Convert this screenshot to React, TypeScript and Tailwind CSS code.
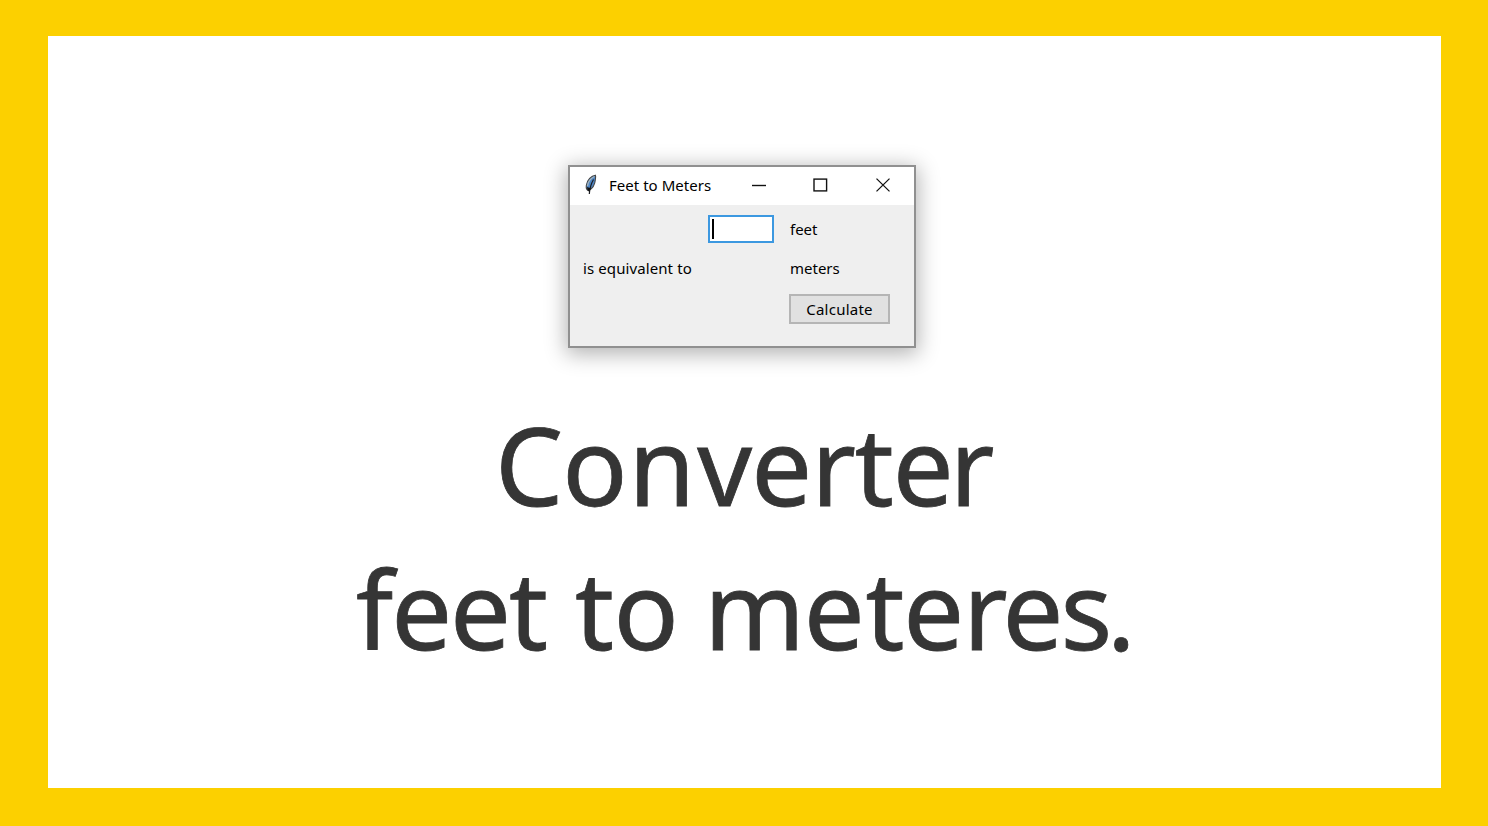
function Feather() {
  return (
    <svg width="16" height="22" viewBox="0 0 16 22" className="shrink-0">
      <path d="M12.4 1.2C8.5 1.8 4 5.800 3.300 11.500C3 14 3.600 16 5.600 16.800C9.500 14.500 12 10 12.300 6C12.500 4 13 2.500 12.400 1.200Z" fill="#4e86c6" stroke="#454545" strokeWidth="1.1" />
      <path d="M11.500 2.500C8 4 5.200 7.500 4.500 12" fill="none" stroke="#a5b5bd" strokeWidth="1.300" />
      <path d="M10.500 5.500C8.500 9 6.800 12.500 6.300 20" fill="none" stroke="#1c1e22" strokeWidth="1.200" />
      <path d="M4 13L7.800 14.200L6.300 17.500L4.500 16Z" fill="#111" />
    </svg>
  );
}

function TitleBar() {
  return (
    <div className="flex h-[38px] items-start bg-white text-black">
      <div className="ml-[13px] mt-[7px] h-[22px] w-4">
        <Feather />
      </div>
      <span className="ml-[10px] mt-[6px] w-[140px] text-[15px] leading-6 tracking-[0.03px]">Feet to Meters</span>
      <svg width="142" height="16" viewBox="0 0 142 16" className="mt-[10px] shrink-0" fill="none" stroke="#111">
        <path d="M3 8.500H17" strokeWidth="1.400" />
        <rect x="65" y="2.100" width="12.600" height="11.800" strokeWidth="1.400" />
        <path d="M127.500 1.600L140.500 14.400M140.500 1.600L127.500 14.400" strokeWidth="1.300" />
      </svg>
    </div>
  );
}

function ConverterWindow() {
  return (
    <div className="mt-[129px] ml-[520px] h-[183px] w-[348px] shrink-0 border-2 border-[#909090] bg-[#efefef] font-['Noto_Sans','Open_Sans',sans-serif] text-[15px] text-black shadow-[0_4px_20px_2px_rgba(0,0,0,0.3)]">
      <TitleBar />
      <div className="flex h-12 items-center">
        <div className="ml-[138px] flex h-[28px] w-[66px] items-center border-2 border-[#3c98e0] bg-white pl-[2px]">
          <div className="h-5 w-[1.500px] bg-black" />
        </div>
        <span className="ml-4 leading-6">feet</span>
      </div>
      <div className="flex h-[30px] items-center">
        <span className="ml-[13px] w-[207px] leading-6 tracking-[0.1px]">is equivalent to</span>
        <span className="leading-6">meters</span>
      </div>
      <button className="ml-[219px] mt-[11px] flex h-[30px] w-[101px] items-center justify-center border-2 border-[#b5b5b5] bg-[#e1e1e1] leading-6 tracking-[0.250px]">
        Calculate
      </button>
    </div>
  );
}

export default function App() {
  return (
    <main className="h-[826px] w-[1488px] bg-[#fcd000] pt-9 pl-12">
      <section className="flex h-[752px] w-[1393px] flex-col overflow-hidden bg-white">
        <ConverterWindow />
        <h1 className="mt-[45px] font-['Noto_Sans','Open_Sans',sans-serif] text-[108px] leading-[144px] font-normal whitespace-nowrap text-[#353535] [-webkit-text-stroke:0.800px_#353535]">
          <span className="ml-[447px] block tracking-[-1px]">
            C<span className="tracking-[1px]">o</span>
            <span className="tracking-[2px]">n</span>vert<span className="tracking-[-4px]">e</span>r
          </span>
          <span className="ml-[308px] flex">
            <span className="w-[219px] tracking-[-2px]">feet</span>
            <span className="w-[129px] tracking-[-0.500px]">to</span>
            <span className="tracking-[-1.300px]">
              m<span className="tracking-[1px]">e</span>te<span className="tracking-[-5px]">r</span>
              <span className="tracking-[-3px]">e</span>
              <span className="tracking-[-5.500px]">s</span>.
            </span>
          </span>
        </h1>
      </section>
    </main>
  );
}
